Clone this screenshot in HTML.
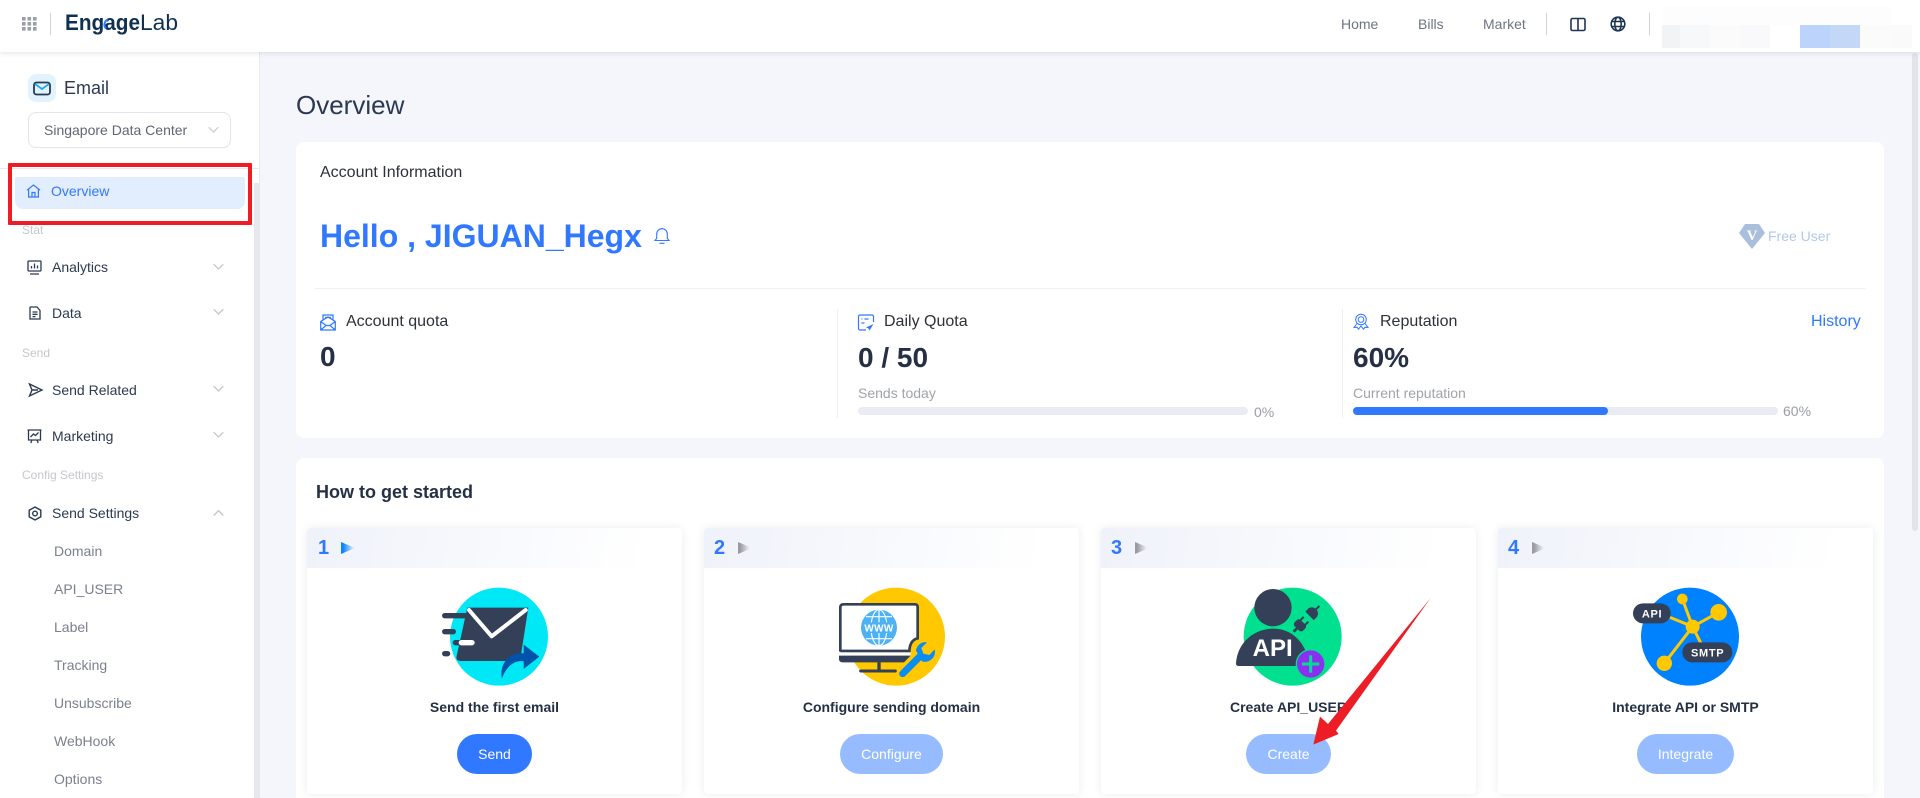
<!DOCTYPE html>
<html lang="en"><head><meta charset="utf-8"><title>EngageLab Email Overview</title>
<style>
*{box-sizing:border-box}
html,body{margin:0;padding:0;width:1920px;height:798px;overflow:hidden;background:#f5f6fb;font-family:"Liberation Sans",Arial,sans-serif}
.a{position:absolute}
.t{position:absolute;white-space:nowrap;line-height:20px;height:20px}
.nav{font-size:14px;color:#2c3a50;left:52px}
.sub{font-size:14px;color:#7b808d;left:54px}
.lab{font-size:12px;color:#c5c7cc;left:22px}
.q{font-size:16px;color:#2d3138}
.big{font-size:28px;font-weight:700;color:#253044;line-height:32px;height:32px}
.small{font-size:14px;color:#a0a3a8}
.ct{font-size:14px;font-weight:700;color:#253044;top:697px;width:375px;text-align:center}
.btn{position:absolute;top:734px;height:40px;border-radius:20px;background:#96bcff;color:#fff;font-size:14px;line-height:40px;text-align:center}
.card{position:absolute;top:528px;width:375px;height:266px;background:#fff;border-radius:4px;box-shadow:0 0 9px rgba(40,50,90,.09);overflow:hidden}
.card i{display:block;height:40px;background:linear-gradient(100deg,#eff2fa,#fff 90%)}
.num{position:absolute;top:538px;font-size:20px;font-weight:700;color:#3078ff;line-height:20px}
svg{position:absolute;overflow:visible}
</style></head><body>

<!-- main panels -->
<div class="a" style="left:296px;top:142px;width:1588px;height:296px;background:#fff;border-radius:8px"></div>
<div class="a" style="left:296px;top:458px;width:1588px;height:340px;background:#fff;border-radius:8px 8px 0 0"></div>
<div class="a" style="left:1912px;top:53px;width:6px;height:478px;background:#e3e4e9;border-radius:3px"></div>

<!-- sidebar -->
<div class="a" style="left:0;top:52px;width:260px;height:746px;background:#fff;border-right:1px solid #e8e9ee"></div>
<div class="a" style="left:254px;top:183px;width:5px;height:615px;background:#e7e7ed"></div>
<div class="a" style="left:0;top:168px;width:259px;height:1px;background:#e8e9ee"></div>

<!-- header -->
<div class="a" style="left:0;top:0;width:1920px;height:52px;background:#fff;box-shadow:0 1px 5px rgba(30,40,70,.13)"></div>
<svg style="left:22px;top:17px" width="15" height="14" viewBox="0 0 15 14" fill="#9a9ea6"><rect x="0" y="0" width="3.6" height="3.6"/><rect x="5.5" y="0" width="3.6" height="3.6"/><rect x="11" y="0" width="3.6" height="3.6"/><rect x="0" y="5" width="3.6" height="3.6"/><rect x="5.5" y="5" width="3.6" height="3.6"/><rect x="11" y="5" width="3.6" height="3.6"/><rect x="0" y="10" width="3.6" height="3.6"/><rect x="5.5" y="10" width="3.6" height="3.6"/><rect x="11" y="10" width="3.6" height="3.6"/></svg>
<div class="a" style="left:50px;top:13px;width:1px;height:22px;background:#cfd2d8"></div>
<svg style="left:65px;top:10px" width="115" height="30" viewBox="0 0 115 30">
<text x="0" y="20" font-family="Liberation Sans" font-size="22" font-weight="700" fill="#10304f" textLength="75" lengthAdjust="spacingAndGlyphs">Engage</text>
<text x="75" y="20" font-family="Liberation Sans" font-size="22" fill="#10304f" textLength="38" lengthAdjust="spacingAndGlyphs">Lab</text>
<path d="M43 9.500a5.500 5.500 0 0 0-2 9" fill="none" stroke="#3078ff" stroke-width="2"/>
</svg>
<div class="t" style="left:1341px;top:14px;font-size:14px;color:#6d7483">Home</div>
<div class="t" style="left:1418px;top:14px;font-size:14px;color:#6d7483">Bills</div>
<div class="t" style="left:1483px;top:14px;font-size:14px;color:#6d7483">Market</div>
<div class="a" style="left:1546px;top:13px;width:1px;height:22px;background:#cfd2d8"></div>
<svg style="left:1570px;top:17px" width="16" height="15" viewBox="0 0 16 15" fill="none" stroke="#1d3550" stroke-width="1.6"><rect x="1" y="1.500" width="14" height="12" rx="1.500"/><path d="M8 1.500v12"/></svg>
<svg style="left:1610px;top:16px" width="16" height="16" viewBox="0 0 16 16" fill="none" stroke="#1d3550" stroke-width="1.600"><circle cx="8" cy="8" r="6.800"/><ellipse cx="8" cy="8" rx="3.200" ry="6.800"/><path d="M1.500 5.500h13M1.500 10.500h13"/></svg>
<div class="a" style="left:1649px;top:13px;width:1px;height:22px;background:#cfd2d8"></div>
<div class="a" style="left:1662px;top:7px;width:230px;height:18px;background:#fdfdfd"></div>
<div class="a" style="left:1662px;top:25px;width:18px;height:23px;background:#f2f3f5"></div>
<div class="a" style="left:1680px;top:25px;width:30px;height:23px;background:#f7f8fa"></div>
<div class="a" style="left:1710px;top:25px;width:30px;height:23px;background:#fbfbfc"></div>
<div class="a" style="left:1740px;top:25px;width:30px;height:23px;background:#f9f9fb"></div>
<div class="a" style="left:1800px;top:25px;width:30px;height:23px;background:#bcd4fb"></div>
<div class="a" style="left:1830px;top:25px;width:30px;height:23px;background:#c4d7f6"></div>
<div class="a" style="left:1860px;top:25px;width:30px;height:23px;background:#fbfbfc"></div>
<div class="a" style="left:1890px;top:25px;width:22px;height:23px;background:#fafafb"></div>

<!-- sidebar top -->
<div class="a" style="left:28px;top:74px;width:28px;height:28px;background:#e2f3fe;border-radius:8px"></div>
<svg style="left:33px;top:81px" width="18" height="15" viewBox="0 0 18 15" fill="none"><rect x="1" y="1.500" width="16" height="12" rx="2.500" stroke="#243a57" stroke-width="1.800"/><path d="M2 3l7 5 7-5" stroke="#1fa9ee" stroke-width="1.800"/></svg>
<div class="t" style="left:64px;top:78px;font-size:18px;color:#2b3a52">Email</div>
<div class="a" style="left:28px;top:112px;width:203px;height:36px;border:1px solid #e3e5ea;border-radius:8px"></div>
<div class="t" style="left:44px;top:120px;font-size:14px;color:#5f6673">Singapore Data Center</div>
<svg style="left:208px;top:126px" width="11" height="8" viewBox="0 0 11 8" fill="none" stroke="#c9cbd1" stroke-width="1.200"><path d="M.7 1.200l4.800 4.800 4.800-4.800"/></svg>

<div class="a" style="left:15px;top:177px;width:230px;height:32px;background:#e2edfd;border-radius:2px 2px 8px 8px"></div>
<svg style="left:26px;top:184px" width="15" height="14" viewBox="0 0 15 14" fill="none" stroke="#3078ff" stroke-width="1.200"><path d="M1 6.200L7.500 1 14 6.200M2.600 5v8h9.800V5M6 13V8.500h3V13"/></svg>
<div class="t" style="left:51px;top:181px;font-size:14px;color:#3078ff">Overview</div>
<div class="a" style="left:8px;top:163px;width:244px;height:62px;border:4px solid #ee1c25;border-radius:1px"></div>

<div class="t lab" style="top:220px">Stat</div>
<div class="t nav" style="top:257px">Analytics</div>
<div class="t nav" style="top:303px">Data</div>
<div class="t lab" style="top:343px">Send</div>
<div class="t nav" style="top:380px">Send Related</div>
<div class="t nav" style="top:426px">Marketing</div>
<div class="t lab" style="top:465px">Config Settings</div>
<div class="t nav" style="top:503px">Send Settings</div>
<div class="t sub" style="top:541px">Domain</div>
<div class="t sub" style="top:579px">API_USER</div>
<div class="t sub" style="top:617px">Label</div>
<div class="t sub" style="top:655px">Tracking</div>
<div class="t sub" style="top:693px">Unsubscribe</div>
<div class="t sub" style="top:731px">WebHook</div>
<div class="t sub" style="top:769px">Options</div>

<svg style="left:27px;top:260px" width="15" height="15" viewBox="0 0 15 15" fill="none" stroke="#2c3a50" stroke-width="1.300"><rect x="1" y="1" width="13" height="10" rx="1"/><path d="M4.500 8.500V6M7.500 8.500V3.500M10.500 8.500V5.500M3 14h9"/></svg>
<svg style="left:29px;top:306px" width="12" height="14" viewBox="0 0 12 14" fill="none" stroke="#2c3a50" stroke-width="1.300"><path d="M1 1.500V13h10V4.500L8 1H1.500zM3.500 6h5M3.500 8.300h5M3.500 10.600h3"/></svg>
<svg style="left:28px;top:383px" width="15" height="14" viewBox="0 0 15 14" fill="none" stroke="#2c3a50" stroke-width="1.400"><path d="M1.500 1L14 7 1.500 13 4 7zM4 7h6"/></svg>
<svg style="left:27px;top:429px" width="15" height="15" viewBox="0 0 15 15" fill="none" stroke="#2c3a50" stroke-width="1.300"><path d="M.5 1h14M1.500 1v10h12V1M3.500 8l3-3 2 1.500 3-3M5 11l-1.200 3M10 11l1.200 3"/></svg>
<svg style="left:28px;top:506px" width="14" height="15" viewBox="0 0 14 15" fill="none" stroke="#2c3a50" stroke-width="1.400"><path d="M7 1l5.800 3.200v6.600L7 14 1.200 10.800V4.200z"/><circle cx="7" cy="7.500" r="2.300"/></svg>
<svg style="left:213px;top:263px" width="11" height="8" viewBox="0 0 11 8" fill="none" stroke="#c3c5cb" stroke-width="1.300"><path d="M.7 1.200l4.800 4.800 4.800-4.800"/></svg>
<svg style="left:213px;top:308px" width="11" height="8" viewBox="0 0 11 8" fill="none" stroke="#c3c5cb" stroke-width="1.300"><path d="M.7 1.200l4.800 4.800 4.800-4.800"/></svg>
<svg style="left:213px;top:385px" width="11" height="8" viewBox="0 0 11 8" fill="none" stroke="#c3c5cb" stroke-width="1.300"><path d="M.7 1.200l4.800 4.800 4.800-4.800"/></svg>
<svg style="left:213px;top:431px" width="11" height="8" viewBox="0 0 11 8" fill="none" stroke="#c3c5cb" stroke-width="1.300"><path d="M.7 1.200l4.800 4.800 4.800-4.800"/></svg>
<svg style="left:213px;top:509px" width="11" height="8" viewBox="0 0 11 8" fill="none" stroke="#c3c5cb" stroke-width="1.300"><path d="M.7 6.500l4.800-4.800 4.800 4.800"/></svg>

<!-- content -->
<div class="t" style="left:296px;top:90px;font-size:26px;line-height:30px;height:30px;color:#2b3a52">Overview</div>
<div class="t" style="left:320px;top:163px;font-size:16px;color:#2d3138">Account Information</div>
<div class="t" style="left:320px;top:218px;font-size:32px;font-weight:700;line-height:36px;height:36px;color:#3078ff">Hello , JIGUAN_Hegx</div>
<svg style="left:654px;top:227px" width="16" height="18" viewBox="0 0 16 18" fill="none" stroke="#3078ff" stroke-width="1.100"><path d="M1 13.500h14l-1.700-2.200V7A5.300 5.300 0 0 0 2.700 7v4.300zM5.500 16.300h5M8 1v.8"/></svg>
<svg style="left:1739px;top:224px" width="26" height="25" viewBox="0 0 26 25"><path d="M6 0h14l6 9-13 16L0 9z" fill="#a9bfdc"/><text x="13" y="16" text-anchor="middle" font-family="Liberation Serif" font-size="15" font-weight="700" fill="#fff">V</text></svg>
<div class="t" style="left:1768px;top:226px;font-size:14px;color:#b3c8e6">Free User</div>
<div class="a" style="left:315px;top:288px;width:1550px;height:1px;background:#eef0f5"></div>
<div class="a" style="left:837px;top:309px;width:1px;height:109px;background:#eef0f5"></div>
<div class="a" style="left:1342px;top:309px;width:1px;height:109px;background:#eef0f5"></div>

<svg style="left:320px;top:314px" width="16" height="17" viewBox="0 0 16 17" fill="none" stroke="#3078ff" stroke-width="1.200"><path d="M.7 7.500V16h14.600V7.500L8 3zM3 5.500V1h10v4.500M5 3.500h6M.7 7.500L6 11.500M15.300 7.500L10 11.500M.7 16L6 11.500h4L15.300 16"/></svg>
<div class="t q" style="left:346px;top:312px">Account quota</div>
<div class="t big" style="left:320px;top:341px">0</div>

<svg style="left:858px;top:314px" width="16" height="17" viewBox="0 0 16 17" fill="none" stroke="#3078ff" stroke-width="1.200"><path d="M8 16H2a1.500 1.500 0 0 1-1.500-1.500v-12A1.500 1.500 0 0 1 2 1h12a1.500 1.500 0 0 1 1.500 1.500V8M3.500 5h1M6.500 5h4M3.500 9h3"/><path d="M15.500 10L8 13.500l2.500 1 1 2z" fill="#3078ff" stroke="none"/></svg>
<div class="t q" style="left:884px;top:312px">Daily Quota</div>
<div class="t big" style="left:858px;top:342px">0 / 50</div>
<div class="t small" style="left:858px;top:383px">Sends today</div>
<div class="a" style="left:858px;top:407px;width:390px;height:8px;background:#e9ecf5;border-radius:4px"></div>
<div class="t" style="left:1254px;top:402px;font-size:14px;color:#9a9da5">0%</div>

<svg style="left:1353px;top:313px" width="16" height="17" viewBox="0 0 16 17" fill="none" stroke="#3078ff" stroke-width="1"><circle cx="8" cy="6.500" r="5.300"/><circle cx="8" cy="6.500" r="2.800"/><path d="M4 10.500L1 14.500l3-.3 1.500 2L8 13l2.500 3.200 1.500-2 3 .3-3-4"/></svg>
<div class="t q" style="left:1380px;top:312px">Reputation</div>
<div class="t" style="left:1811px;top:312px;font-size:16px;color:#3078ff">History</div>
<div class="t big" style="left:1353px;top:342px">60%</div>
<div class="t small" style="left:1353px;top:383px">Current reputation</div>
<div class="a" style="left:1353px;top:407px;width:425px;height:8px;background:#e9ecf5;border-radius:4px"></div>
<div class="a" style="left:1353px;top:407px;width:255px;height:8px;background:#3078ff;border-radius:4px"></div>
<div class="t" style="left:1783px;top:401px;font-size:14px;color:#9a9da5">60%</div>

<div class="t" style="left:316px;top:482px;font-size:18px;font-weight:700;color:#253044">How to get started</div>

<!-- cards -->
<div class="card" style="left:307px"><i></i></div>
<div class="card" style="left:704px"><i></i></div>
<div class="card" style="left:1101px"><i></i></div>
<div class="card" style="left:1498px"><i></i></div>

<svg width="0" height="0" style="left:0;top:0"><defs>
<linearGradient id="gb"><stop offset=".15" stop-color="#0a84ff"/><stop offset=".95" stop-color="#0a84ff" stop-opacity="0"/></linearGradient>
<linearGradient id="gg"><stop offset=".15" stop-color="#999ba0"/><stop offset=".85" stop-color="#999ba0" stop-opacity="0"/></linearGradient>
</defs></svg>

<div class="num" style="left:318px">1</div>
<svg style="left:341px;top:542px" width="14" height="12"><path d="M0 0l14 6-14 6z" fill="url(#gb)"/></svg>
<div class="num" style="left:714px">2</div>
<svg style="left:738px;top:542px" width="14" height="12"><path d="M0 0l14 6-14 6z" fill="url(#gg)"/></svg>
<div class="num" style="left:1111px">3</div>
<svg style="left:1135px;top:542px" width="14" height="12"><path d="M0 0l14 6-14 6z" fill="url(#gg)"/></svg>
<div class="num" style="left:1508px">4</div>
<svg style="left:1532px;top:542px" width="14" height="12"><path d="M0 0l14 6-14 6z" fill="url(#gg)"/></svg>

<!-- illustration 1 -->
<svg style="left:300px;top:520px" width="400" height="278" viewBox="0 0 1200 834">
<circle cx="597" cy="350" r="147" fill="#00e8f6"/>
<path d="M502 263H685L660 423H482Q466 423 470 408Z" fill="#334058"/>
<path d="M507 270L575 349L677 270" fill="none" stroke="#fff" stroke-width="12" stroke-linecap="round" stroke-linejoin="round"/>
<g stroke-linecap="round" stroke-width="16" fill="none" stroke="#334058"><path d="M434 287H495M434 335H460M466 368H480M434 401H443"/><path d="M484 368H516" stroke="#fff"/></g>
<path d="M606 476C596 432 630 394 671 400V374L718 410L671 447V424C645 420 618 438 606 476Z" fill="#0053a8"/>
</svg>

<!-- illustration 2 -->
<svg style="left:700px;top:520px" width="400" height="278" viewBox="0 0 1200 834">
<circle cx="588" cy="350" r="147" fill="#ffc800"/>
<path d="M421 395V262Q421 253 431 253H645Q653 253 653 262V355Q630 360 628 393H421Z" fill="#fff" stroke="#334058" stroke-width="8"/>
<path d="M417 397H632V407H417Z" fill="#fff"/>
<path d="M417 407H632L612 427H428Q417 427 417 417Z" fill="#334058"/>
<path d="M537 427V452" stroke="#334058" stroke-width="10"/>
<path d="M482 453H586" stroke="#334058" stroke-width="9" stroke-linecap="round"/>
<circle cx="537" cy="323" r="54" fill="#4db2f5"/>
<g fill="none" stroke="#fff" stroke-width="3.500"><ellipse cx="537" cy="323" rx="24" ry="54"/><path d="M537 269V377M498 290H576M498 356H576"/></g>
<rect x="486" y="307" width="102" height="32" fill="#4db2f5"/>
<text x="537" y="334" text-anchor="middle" font-family="Liberation Sans" font-size="30" font-weight="700" fill="#fff" letter-spacing="1">WWW</text>
<path d="M608 461L658 411" stroke="#0a8cf0" stroke-width="21" stroke-linecap="round"/>
<path d="M648 392A28 28 0 0 1 681 367L664 384L670 401L688 405L704 388A30 30 0 0 1 666 424Z" fill="#0a8cf0"/>
</svg>

<!-- illustration 3 -->
<svg style="left:1100px;top:520px" width="400" height="278" viewBox="0 0 1200 834">
<circle cx="578" cy="350" r="147" fill="#00e08f"/>
<circle cx="519" cy="263" r="56" fill="#334058"/>
<path d="M408 430C412 368 462 326 519 326C575 326 618 365 630 438H416Q408 438 408 430Z" fill="#334058"/>
<text x="518" y="408" text-anchor="middle" font-family="Liberation Sans" font-size="72" font-weight="700" fill="#fff">API</text>
<circle cx="632" cy="432" r="45" fill="#00e08f"/><circle cx="632" cy="432" r="41" fill="#8b2ff0"/>
<path d="M632 406V458M606 432H658" stroke="#00e08f" stroke-width="9"/>
<g transform="translate(602 314) rotate(-45)" fill="#334058"><rect x="-30" y="-4" width="18" height="8"/><rect x="-16" y="-18" width="26" height="36" rx="9"/><rect x="8" y="-13" width="15" height="6"/><rect x="8" y="7" width="15" height="6"/></g>
<g transform="translate(637 279) rotate(-45)" fill="#334058"><path d="M-12 -18H2Q16 -14 16 0Q16 14 2 18H-12Z"/><rect x="14" y="-3" width="16" height="6"/></g>
</svg>

<!-- illustration 4 -->
<svg style="left:1490px;top:520px" width="430" height="278" viewBox="0 0 1290 834">
<circle cx="600" cy="350" r="147" fill="#0082ff"/>
<g stroke="#ffc800" stroke-width="9" fill="none"><path d="M608 320L577 237M608 320L686 277M608 320L523 430M608 320L540 292M608 320L640 385"/></g>
<g fill="#ffc800"><circle cx="608" cy="320" r="21"/><circle cx="577" cy="237" r="16"/><circle cx="686" cy="277" r="25"/><circle cx="523" cy="430" r="23"/></g>
<rect x="429" y="250" width="113" height="60" rx="30" fill="#334058"/>
<text x="486" y="293" text-anchor="middle" font-family="Liberation Sans" font-size="33" font-weight="700" fill="#fff" letter-spacing="2">API</text>
<rect x="577" y="367" width="150" height="60" rx="30" fill="#334058"/>
<text x="653" y="410" text-anchor="middle" font-family="Liberation Sans" font-size="33" font-weight="700" fill="#fff" letter-spacing="2">SMTP</text>
</svg>

<div class="t ct" style="left:307px">Send the first email</div>
<div class="t ct" style="left:704px">Configure sending domain</div>
<div class="t ct" style="left:1101px">Create API_USER</div>
<div class="t ct" style="left:1498px">Integrate API or SMTP</div>
<div class="btn" style="left:457px;width:75px;background:#3078ff">Send</div>
<div class="btn" style="left:840px;width:103px">Configure</div>
<div class="btn" style="left:1246px;width:85px">Create</div>
<div class="btn" style="left:1637px;width:97px">Integrate</div>

<!-- red arrow -->
<svg style="left:1100px;top:520px" width="400" height="278" viewBox="0 0 1200 834">
<path d="M992 234L708 632L716 642L640 674L660 590L684 612Z" fill="#ee1c25"/>
</svg>
</body></html>
